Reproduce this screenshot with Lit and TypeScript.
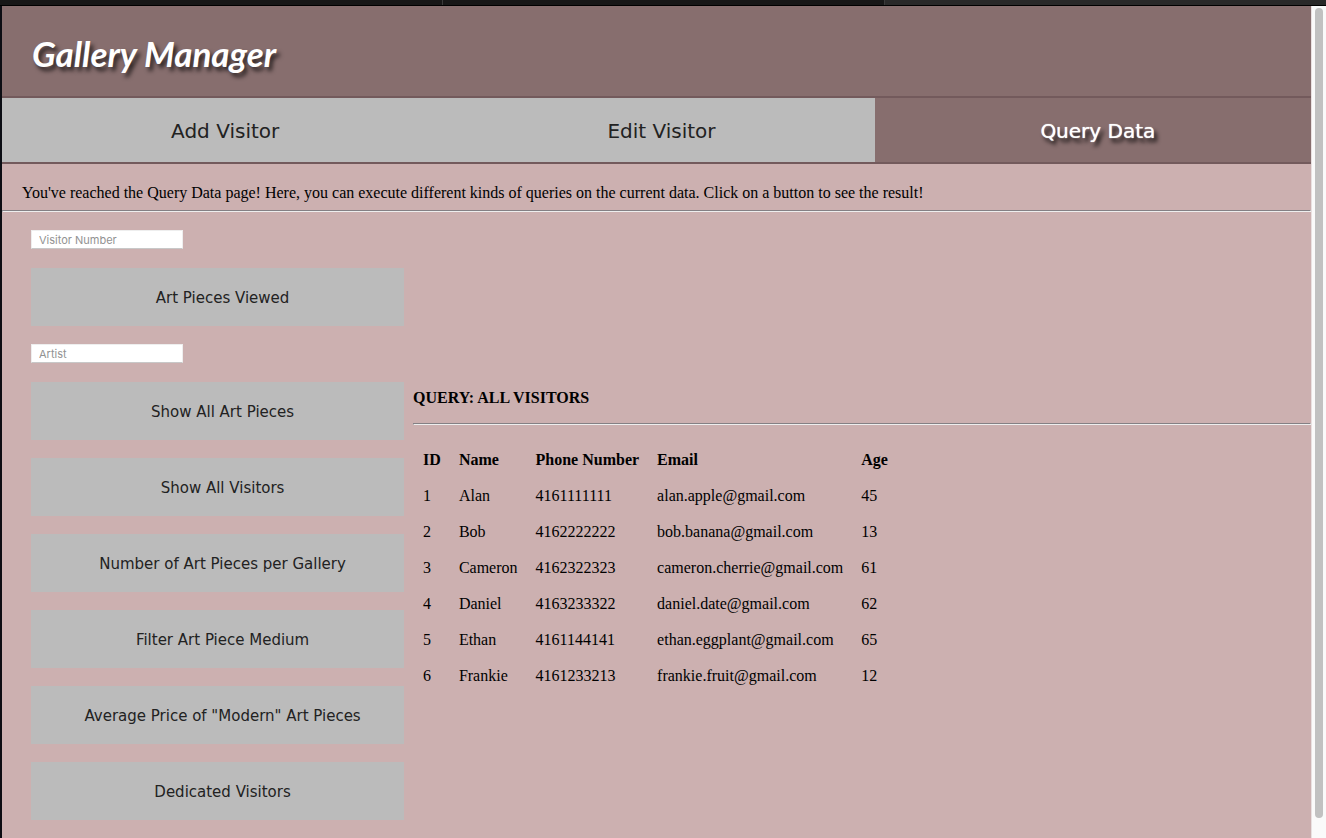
import { LitElement, html, css } from "lit";
import { customElement, property, state } from "lit/decorators.js";

interface Visitor {
  id: number;
  name: string;
  phone: string;
  email: string;
  age: number;
}

const VISITORS: Visitor[] = [
  { id: 1, name: "Alan", phone: "4161111111", email: "alan.apple@gmail.com", age: 45 },
  { id: 2, name: "Bob", phone: "4162222222", email: "bob.banana@gmail.com", age: 13 },
  { id: 3, name: "Cameron", phone: "4162322323", email: "cameron.cherrie@gmail.com", age: 61 },
  { id: 4, name: "Daniel", phone: "4163233322", email: "daniel.date@gmail.com", age: 62 },
  { id: 5, name: "Ethan", phone: "4161144141", email: "ethan.eggplant@gmail.com", age: 65 },
  { id: 6, name: "Frankie", phone: "4161233213", email: "frankie.fruit@gmail.com", age: 12 },
];

const QUERIES = [
  "Show All Visitors",
  "Number of Art Pieces per Gallery",
  "Filter Art Piece Medium",
  'Average Price of "Modern" Art Pieces',
  "Dedicated Visitors",
];

@customElement("visitor-table")
class VisitorTable extends LitElement {
  static styles = css`
    :host {
      display: block;
    }
    table {
      border-spacing: 2px;
      font: inherit;
    }
    th,
    td {
      padding: 8px;
      text-align: left;
    }
  `;

  @property({ attribute: false }) rows: Visitor[] = [];

  render() {
    return html`
      <table>
        <thead>
          <tr>
            <th scope="col">ID</th>
            <th scope="col">Name</th>
            <th scope="col">Phone Number</th>
            <th scope="col">Email</th>
            <th scope="col">Age</th>
          </tr>
        </thead>
        <tbody>
          ${this.rows.map(
            (v) => html`<tr>
              <td>${v.id}</td>
              <td>${v.name}</td>
              <td>${v.phone}</td>
              <td>${v.email}</td>
              <td>${v.age}</td>
            </tr>`
          )}
        </tbody>
      </table>
    `;
  }
}

@customElement("app-root")
class AppRoot extends LitElement {
  static styles = css`
    :host {
      display: flex;
      flex-direction: column;
      height: 100vh;
      overflow: hidden;
      font: 16px/18px "Liberation Serif", serif;
      color: #000;
      background: #0c0d13;
    }
    * {
      box-sizing: border-box;
    }
    .strip {
      flex: none;
      display: grid;
      grid-template-columns: repeat(3, 1fr);
      height: 6px;
      background: #171717;
      border-bottom: 1px solid #000;
    }
    .strip span + span {
      border-left: 1px solid #3a3a3a;
    }
    .strip .current {
      background: #292929;
    }
    .window {
      flex: 1;
      min-height: 0;
      display: flex;
      margin-left: 2px;
    }
    .page {
      flex: 1;
      min-width: 0;
      overflow: hidden;
      background: #ccb0b0;
    }
    .scrollbar {
      flex: none;
      width: 15px;
      padding: 2px 3px 20px;
      background: #fafafa;
      border-left: 1px solid #e8e0e0;
    }
    .thumb {
      height: 100%;
      border-radius: 4px;
      background: #c1c1c1;
    }
    header {
      display: flex;
      align-items: center;
      height: 92px;
      padding: 4px 30px 0;
      background: #876e6e;
      border-bottom: 2px solid #735a5c;
    }
    h1 {
      margin: 0;
      font: italic 700 35px/40px "Bradley Hand", Lato, sans-serif;
      color: #fff;
      text-shadow: 3px 4px 4px #000000b0;
    }
    nav {
      display: grid;
      grid-template-columns: repeat(3, 1fr);
      border-bottom: 2px solid #735a5c;
    }
    nav a {
      padding: 21px 0 19px 10px;
      font: 20px/24px "DejaVu Sans", sans-serif;
      text-align: center;
      text-decoration: none;
      color: #222;
      background: #bbb;
    }
    nav .active {
      color: #fff;
      background: #876e6e;
      text-shadow: 0 0 1px #fff, 3px 4px 4px #000;
    }
    .intro {
      margin: 0;
      padding: 20px 20px 8px;
    }
    hr {
      margin: 0;
      border: 1px solid;
      border-color: #848084 #eee #eee #848084;
    }
    .content {
      display: flex;
      align-items: center;
      gap: 9px;
      padding-left: 29px;
    }
    .queries {
      flex: none;
      display: flex;
      flex-direction: column;
      gap: 18px;
      width: 29.15%;
      padding: 18px 0 36px;
    }
    .queries input {
      width: 152px;
      height: 19px;
      margin: 0 0 1px;
      padding: 1px 7px 0;
      font: 11px/14px Inter, sans-serif;
      color: #222;
      background: #fff;
      border: 1px solid #eee;
      border-bottom-color: #c8c8c8;
      border-radius: 0;
    }
    .queries input::placeholder {
      color: #929292;
      opacity: 1;
    }
    .queries button {
      width: 100%;
      height: 58px;
      margin: 0;
      padding: 2px 0 0 10px;
      font: 15px/18px "DejaVu Sans", sans-serif;
      color: #222;
      background: #bbb;
      border: 0;
    }
    .result {
      flex: 1;
      min-width: 0;
    }
    h2 {
      margin: 16px 0;
      font: inherit;
      font-weight: 700;
    }
    visitor-table {
      margin-top: 16px;
    }
  `;

  @state() private visitors = VISITORS;

  render() {
    return html`
      <div class="strip"><span></span><span></span><span class="current"></span></div>
      <div class="window">
        <div class="page">
          <header><h1>Gallery Manager</h1></header>
          <nav>
            <a href="#add">Add Visitor</a>
            <a href="#edit">Edit Visitor</a>
            <a class="active" href="#query" aria-current="page">Query Data</a>
          </nav>
          <p class="intro">
            You've reached the Query Data page! Here, you can execute different kinds of queries on
            the current data. Click on a button to see the result!
          </p>
          <hr />
          <main class="content">
            <div class="queries">
              <input type="text" placeholder="Visitor Number" aria-label="Visitor Number" />
              <button type="button">Art Pieces Viewed</button>
              <input type="text" placeholder="Artist" aria-label="Artist" />
              <button type="button">Show All Art Pieces</button>
              ${QUERIES.map((q) => html`<button type="button">${q}</button>`)}
            </div>
            <section class="result">
              <h2>QUERY: ALL VISITORS</h2>
              <hr />
              <visitor-table .rows=${this.visitors}></visitor-table>
            </section>
          </main>
        </div>
        <div class="scrollbar"><div class="thumb"></div></div>
      </div>
    `;
  }
}
